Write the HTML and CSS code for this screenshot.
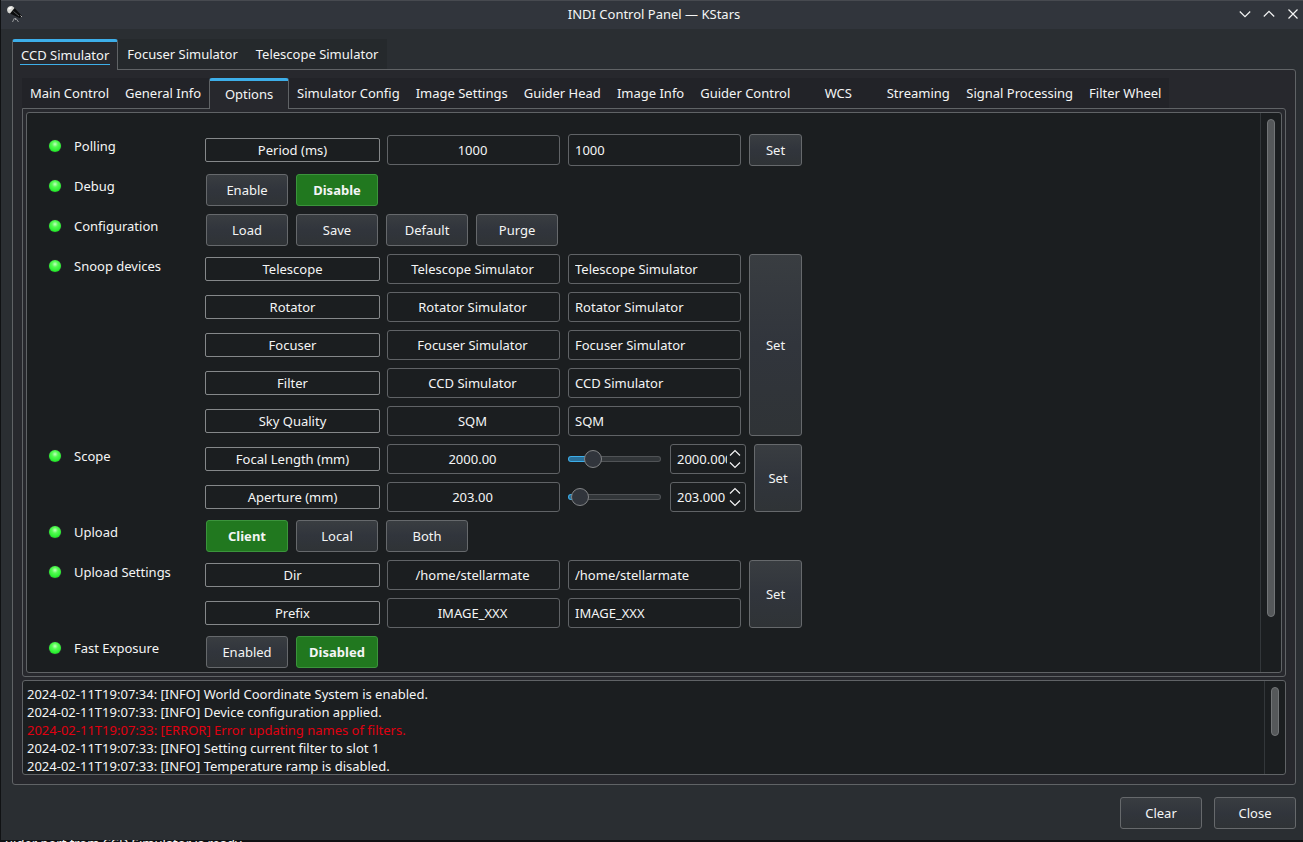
FILE: index.html
```html
<!DOCTYPE html>
<html lang="en">
<head>
<meta charset="utf-8">
<title>INDI Control Panel — KStars</title>
<link rel="stylesheet" href="styles.css">
</head>
<body>
<div class="window">
  <header class="titlebar">
    <svg class="app-icon" width="18" height="20" viewBox="0 0 18 20" aria-hidden="true">
      <path d="M9.5 14 7.5 18M10.5 14v2M11 14.5l2.500 3.500" stroke="#9a9c9e" stroke-width="1" fill="none"/>
      <path d="M6 4.500 9.500 4 17 12 14.500 14 5 9.500z" fill="#0b0c0d"/>
      <path d="M8.500 7.500 14 12" stroke="#55585a" stroke-width="1"/>
      <path d="M2 6C2 3 5 1.300 7.500 2.200L9.500 4 5 9.500 2.800 8.500z" fill="#d6d6d2"/>
      <path d="M3.500 5 6.500 3.500" stroke="#fff" stroke-width="1.500"/>
      <path d="M15.500 11.500l1.500 1.500" stroke="#b5b5b5" stroke-width="1"/>
    </svg>
    <h1 class="title">INDI Control Panel — KStars</h1>
    <div class="window-buttons">
      <button class="window-button" aria-label="Minimize"><svg width="12" height="12" viewBox="0 0 12 12"><path d="M.8 3.5 6 8.7l5.2-5.2"/></svg></button>
      <button class="window-button" aria-label="Maximize"><svg width="12" height="12" viewBox="0 0 12 12"><path d="M.8 8.5 6 3.3l5.2 5.2"/></svg></button>
      <button class="window-button" aria-label="Close window"><svg width="12" height="12" viewBox="0 0 12 12"><path d="M1.5 1.5l9 9M10.5 1.5l-9 9"/></svg></button>
    </div>
  </header>

  <main class="content">
    <div class="tabs tabs-device" role="tablist" aria-label="Devices">
      <button class="tab tab-active" role="tab" aria-selected="true"><span class="tab-focus">CCD Simulator</span></button>
      <button class="tab" role="tab">Focuser Simulator</button>
      <button class="tab" role="tab">Telescope Simulator</button>
    </div>
    <section class="pane pane-device">
      <div class="tabs" role="tablist" aria-label="Property groups">
        <button class="tab" role="tab">Main Control</button>
        <button class="tab" role="tab">General Info</button>
        <button class="tab tab-active" role="tab" aria-selected="true">Options</button>
        <button class="tab" role="tab">Simulator Config</button>
        <button class="tab" role="tab">Image Settings</button>
        <button class="tab" role="tab">Guider Head</button>
        <button class="tab" role="tab">Image Info</button>
        <button class="tab" role="tab">Guider Control</button>
        <button class="tab" role="tab">WCS</button>
        <button class="tab" role="tab">Streaming</button>
        <button class="tab" role="tab">Signal Processing</button>
        <button class="tab" role="tab">Filter Wheel</button>
      </div>
      <div class="pane pane-group">
        <div class="view">
          <div class="properties">
            <section class="property">
              <span class="led"></span><h2 class="name">Polling</h2>
              <div class="fields">
                <div class="rows">
                  <div class="row row-tall"><label class="key" for="period">Period (ms)</label><output class="value">1000</output><input class="edit" id="period" value="1000"></div>
                </div>
                <button class="button set">Set</button>
              </div>
            </section>
            <section class="property">
              <span class="led"></span><h2 class="name">Debug</h2>
              <div class="switches"><button class="button">Enable</button><button class="button button-on">Disable</button></div>
            </section>
            <section class="property">
              <span class="led"></span><h2 class="name">Configuration</h2>
              <div class="switches"><button class="button">Load</button><button class="button">Save</button><button class="button">Default</button><button class="button">Purge</button></div>
            </section>
            <section class="property">
              <span class="led"></span><h2 class="name">Snoop devices</h2>
              <div class="fields">
                <div class="rows">
                  <div class="row"><label class="key" for="telescope">Telescope</label><output class="value">Telescope Simulator</output><input class="edit" id="telescope" value="Telescope Simulator"></div>
                  <div class="row"><label class="key" for="rotator">Rotator</label><output class="value">Rotator Simulator</output><input class="edit" id="rotator" value="Rotator Simulator"></div>
                  <div class="row"><label class="key" for="focuser">Focuser</label><output class="value">Focuser Simulator</output><input class="edit" id="focuser" value="Focuser Simulator"></div>
                  <div class="row"><label class="key" for="filter">Filter</label><output class="value">CCD Simulator</output><input class="edit" id="filter" value="CCD Simulator"></div>
                  <div class="row"><label class="key" for="sky">Sky Quality</label><output class="value">SQM</output><input class="edit" id="sky" value="SQM"></div>
                </div>
                <button class="button set">Set</button>
              </div>
            </section>
            <section class="property">
              <span class="led"></span><h2 class="name">Scope</h2>
              <div class="fields">
                <div class="rows">
                  <div class="row">
                    <label class="key" for="focal">Focal Length (mm)</label><output class="value">2000.00</output>
                    <input class="slider" type="range" min="0" max="10000" value="2000" style="--fill:20%" aria-label="Focal Length">
                    <div class="spin"><input class="spin-text" id="focal" value="2000.000"><div class="spin-buttons"><button class="spin-button" aria-label="Increase focal length"><svg width="12" height="8" viewBox="0 0 12 8"><path d="M1 6.5l5-5 5 5"/></svg></button><button class="spin-button" aria-label="Decrease focal length"><svg width="12" height="8" viewBox="0 0 12 8"><path d="M1 1.5l5 5 5-5"/></svg></button></div></div>
                  </div>
                  <div class="row">
                    <label class="key" for="aperture">Aperture (mm)</label><output class="value">203.00</output>
                    <input class="slider" type="range" min="0" max="3000" value="90" style="--fill:5%" aria-label="Aperture">
                    <div class="spin"><input class="spin-text" id="aperture" value="203.000"><div class="spin-buttons"><button class="spin-button" aria-label="Increase aperture"><svg width="12" height="8" viewBox="0 0 12 8"><path d="M1 6.5l5-5 5 5"/></svg></button><button class="spin-button" aria-label="Decrease aperture"><svg width="12" height="8" viewBox="0 0 12 8"><path d="M1 1.5l5 5 5-5"/></svg></button></div></div>
                  </div>
                </div>
                <button class="button set set-narrow">Set</button>
              </div>
            </section>
            <section class="property">
              <span class="led"></span><h2 class="name">Upload</h2>
              <div class="switches"><button class="button button-on">Client</button><button class="button">Local</button><button class="button">Both</button></div>
            </section>
            <section class="property">
              <span class="led"></span><h2 class="name">Upload Settings</h2>
              <div class="fields">
                <div class="rows">
                  <div class="row"><label class="key" for="dir">Dir</label><output class="value">/home/stellarmate</output><input class="edit" id="dir" value="/home/stellarmate"></div>
                  <div class="row"><label class="key" for="prefix">Prefix</label><output class="value">IMAGE_XXX</output><input class="edit" id="prefix" value="IMAGE_XXX"></div>
                </div>
                <button class="button set">Set</button>
              </div>
            </section>
            <section class="property">
              <span class="led"></span><h2 class="name">Fast Exposure</h2>
              <div class="switches"><button class="button">Enabled</button><button class="button button-on">Disabled</button></div>
            </section>
          </div>
          <div class="scrollbar"><div class="thumb" style="height:91%"></div></div>
        </div>
      </div>
      <div class="view log">
        <div class="log-lines">
          <p>2024-02-11T19:07:34: [INFO] World Coordinate System is enabled.</p>
          <p>2024-02-11T19:07:33: [INFO] Device configuration applied.</p>
          <p class="error">2024-02-11T19:07:33: [ERROR] Error updating names of filters.</p>
          <p>2024-02-11T19:07:33: [INFO] Setting current filter to slot 1</p>
          <p>2024-02-11T19:07:33: [INFO] Temperature ramp is disabled.</p>
        </div>
        <div class="scrollbar"><div class="thumb" style="height:60%"></div></div>
      </div>
    </section>
    <div class="actions"><button class="button">Clear</button><button class="button">Close</button></div>
  </main>
</div>
<div class="backdrop-text">uider port from CCD Simulator is ready.</div>
</body>
</html>
```
FILE: styles.css
```css
* { box-sizing: border-box; }

:root {
  --window: #2a2e32;
  --pane: #27282d;
  --view: #1b1e20;
  --line: #606366;
  --text: #f4f5f5;
  --accent: #3daee9;
}

body {
  margin: 0;
  min-height: 100vh;
  display: flex;
  flex-direction: column;
  padding-left: 1px;
  background: #101214;
  color: var(--text);
  font: 13px/18px "Noto Sans", sans-serif;
}

button, input { font: inherit; color: inherit; }
button { padding: 0; }
h1, h2, p { margin: 0; font-size: inherit; font-weight: 400; }
svg { display: block; }

.window {
  flex: 1;
  display: flex;
  flex-direction: column;
  background: var(--window);
}

.titlebar {
  display: grid;
  grid-template-columns: 74px 1fr 70px;
  align-items: center;
  height: 29px;
  padding: 0 4px 2px;
  border-top: 1px solid #474a50;
  background: #31353c;
}
.title { text-align: center; }
.window-buttons { display: flex; justify-content: flex-end; gap: 12px; }
.window-button { width: 12px; height: 12px; border: 0; background: none; }
.window-button path, .spin-button path { fill: none; stroke: #f4f5f5; stroke-width: 1.2; }

.content {
  flex: 1;
  display: flex;
  flex-direction: column;
  padding: 10px 7px 11px 11px;
}

.tabs { display: flex; }
.tab {
  height: 30px;
  min-width: 80px;
  padding: 0 8px;
  border: 0;
  background: #222328;
  white-space: nowrap;
}
.tabs-device .tab { padding: 0 9px; background: #25292c; }
.tab.tab-active {
  height: 31px;
  margin-bottom: -1px;
  padding: 0 7px 3px;
  border: 1px solid var(--line);
  border-top: 3px solid var(--accent);
  border-bottom: 0;
  border-radius: 3px 3px 0 0;
  background: var(--pane);
  z-index: 1;
}
.tabs-device .tab.tab-active { padding: 0 7px 2px; }
.tab-focus { display: block; padding: 1px 1px 0; border-bottom: 1px solid var(--accent); }

.pane {
  flex: 1;
  display: flex;
  flex-direction: column;
  border: 1px solid var(--line);
  border-radius: 0 3px 3px 3px;
  background: var(--pane);
}
.pane-device { padding: 8px 9px 9px; }
.pane-group { padding: 3px; margin-bottom: 3px; }

.view {
  flex: 1;
  display: flex;
  border: 1px solid var(--line);
  border-radius: 3px;
  background: var(--view);
}

.properties {
  flex: 1;
  display: flex;
  flex-direction: column;
  gap: 8px;
  padding: 21px 8px 3px 22px;
}
.property {
  display: grid;
  grid-template-columns: 25px 131px auto;
  justify-content: start;
  align-items: start;
}
.led {
  width: 12px;
  height: 12px;
  margin-top: 6px;
  border-radius: 50%;
  background: radial-gradient(circle at 50% 35%, #c4ffbf 0, #54fb52 30%, #2cf032 65%, #12a016 100%);
  box-shadow: 0 0 1px #5a6a60;
}
.name { line-height: 24px; }

.fields { display: flex; gap: 8px; }
.rows { display: grid; gap: 8px; }
.row { display: flex; align-items: center; min-height: 30px; }
.row-tall { min-height: 32px; }
.key, .value {
  border: 1px solid #85888a;
  border-radius: 2px;
  text-align: center;
}
.key { width: 175px; line-height: 22px; margin-right: 7px; }
.value {
  width: 173px;
  line-height: 28px;
  margin-right: 8px;
  padding-right: 2px;
  border-color: var(--line);
  border-radius: 3px;
}
.edit {
  width: 173px;
  height: 30px;
  padding: 0 6px;
  border: 1px solid var(--line);
  border-radius: 3px;
  background: none;
}
.row-tall .edit { height: 32px; }

.switches { display: flex; gap: 8px; padding-left: 1px; }
.button {
  width: 82px;
  height: 32px;
  border: 1px solid #66696c;
  border-radius: 3px;
  background: linear-gradient(#393d41, #31353c 50%, #2f3336);
}
.button-on { border-color: #3b943c; background: #21781f; font-weight: 700; }
.button.set { width: 53px; height: auto; }
.button.set-narrow { width: 48px; }

.slider {
  appearance: none;
  width: 93px;
  height: 18px;
  margin: 0 9px 0 0;
  background: none;
}
.slider::-webkit-slider-runnable-track {
  height: 6px;
  border: 1px solid #505356;
  border-radius: 3px;
  background:
    linear-gradient(90deg, #2a6f98 var(--fill), #323639 var(--fill)) padding-box,
    linear-gradient(90deg, var(--accent) var(--fill), #505356 var(--fill)) border-box;
  border-color: transparent;
}
.slider::-webkit-slider-thumb {
  appearance: none;
  width: 18px;
  height: 18px;
  margin-top: -7px;
  border: 1px solid #828486;
  border-radius: 50%;
  background: #31353c;
}

.spin {
  display: flex;
  width: 76px;
  height: 30px;
  padding: 0 4px 0 6px;
  border: 1px solid var(--line);
  border-radius: 3px;
}
.spin-text { flex: 1; min-width: 0; padding: 0; border: 0; background: none; }
.spin-buttons { display: flex; flex-direction: column; justify-content: center; gap: 4px; padding-left: 2px; }
.spin-button { border: 0; background: none; }

.scrollbar {
  width: 21px;
  padding: 6px 0 6px 6px;
  border-left: 1px solid #33373a;
}
.thumb {
  width: 8px;
  border: 1px solid #727577;
  border-radius: 4px;
  background: #55585a;
}

.log { flex: none; height: 95px; }
.log-lines { flex: 1; padding: 4px; overflow: hidden; }
.error { color: #e00010; }

.actions { display: flex; justify-content: flex-end; gap: 12px; padding-top: 12px; }

.backdrop-text {
  height: 2px;
  padding-left: 4px;
  line-height: 6px;
  overflow: hidden;
}
```
